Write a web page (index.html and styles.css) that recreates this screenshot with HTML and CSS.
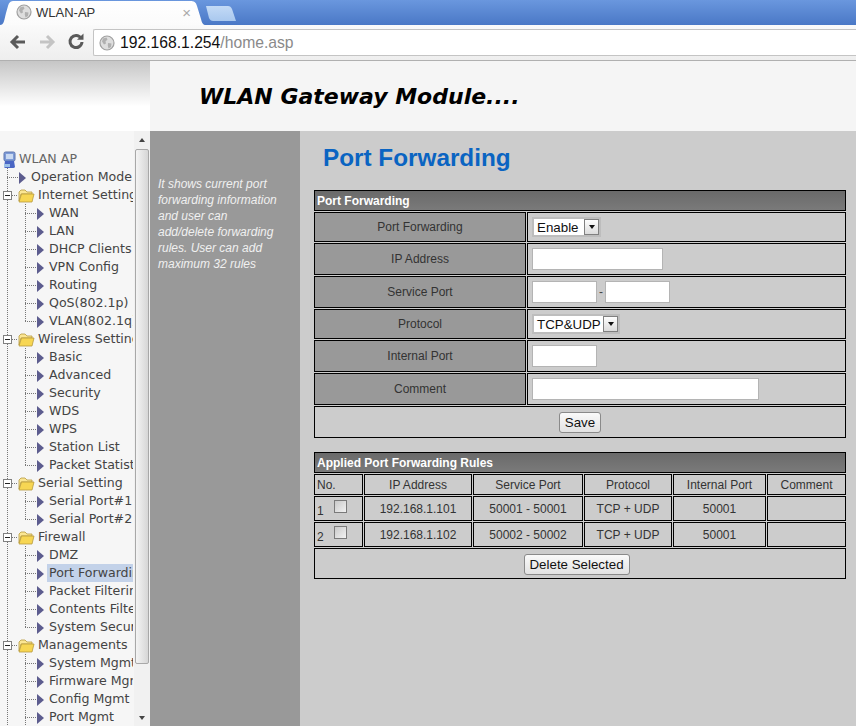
FILE: index.html
```html
<!DOCTYPE html>
<html lang="en">
<head>
<meta charset="utf-8">
<title>WLAN-AP</title>
<link rel="stylesheet" href="styles.css">
</head>
<body>
<svg class="defs" width="0" height="0" aria-hidden="true">
  <defs>
    <symbol id="globe" viewBox="0 0 16 16">
      <circle cx="8" cy="8" r="7" fill="#dedede" stroke="#a0a0a0" stroke-width="1.2"/>
      <path d="M4 3.5 7.5 2.5 8.5 4.5 6.5 6.5 7 8.5 5 9.5 3 6.5zM9 8 12.5 8.5 12 12 9.5 13.5 8.8 10.5z" fill="#b0b0b0"/>
    </symbol>
    <symbol id="arrow" viewBox="0 0 7 14">
      <path d="M0 1 7 7 0 13z" fill="#5c5c8e"/>
    </symbol>
    <symbol id="folder" viewBox="0 0 17 14">
      <path d="M1 3 3 1H7L9 3H14V5H3L1 12z" fill="#fbe694" stroke="#b79a3c" stroke-width=".8"/>
      <path d="M1 13 3.5 5H16L14 13z" fill="#f7d653" stroke="#b79a3c" stroke-width=".8"/>
    </symbol>
    <symbol id="minus" viewBox="0 0 9 9">
      <rect x=".5" y=".5" width="8" height="8" fill="#fff" stroke="#808080"/>
      <path d="M2 4.5H7" stroke="#222"/>
    </symbol>
  </defs>
</svg>

<header class="browser">
  <div class="tabstrip">
    <div class="tab">
      <svg class="tab-globe" width="16" height="16"><use href="#globe"/></svg>
      <span class="tab-title">WLAN-AP</span>
      <span class="tab-close">×</span>
    </div>
    <div class="newtab"></div>
  </div>
  <div class="toolbar">
    <svg class="nav" width="18" height="18" viewBox="0 0 18 18"><path d="M9 3 3 9l6 6M3.5 9H16" fill="none" stroke="#5a5a5a" stroke-width="3"/></svg>
    <svg class="nav" width="18" height="18" viewBox="0 0 18 18"><path d="M9 3l6 6-6 6M14.5 9H2" fill="none" stroke="#c4c4c4" stroke-width="3"/></svg>
    <svg class="nav" width="18" height="18" viewBox="0 0 18 18"><path d="M14 5.2A6 6 0 1 0 15 9" fill="none" stroke="#5a5a5a" stroke-width="3"/><path d="M10 6.8H16.5V.6z" fill="#5a5a5a"/></svg>
    <div class="omnibox">
      <svg width="16" height="16"><use href="#globe"/></svg>
      <span class="url"><span class="host">192.168.1.254</span>/home.asp</span>
    </div>
  </div>
</header>

<div class="banner">
  <div class="banner-fade"></div>
  <div class="banner-title">WLAN Gateway Module....</div>
</div>

<main class="main">
  <nav class="side">
    <div class="tree">
      <div class="row"><svg class="root-icon" width="16" height="18" viewBox="0 0 16 18"><rect x="3" y="1" width="11" height="9" rx="1.5" fill="#7d9bd8" stroke="#5d74ad"/><rect x="5" y="3" width="7" height="5" fill="#c9d9f2"/><path d="M4 10h9l1 6a2 2 0 0 1-2 1H5a2 2 0 0 1-2-1z" fill="#4a66c4"/><path d="M3 13h6v3H3z" fill="#9cc0e8"/></svg><span class="t root-t">WLAN AP</span></div>

      <div class="row"><i class="c j"></i><svg class="leaf" width="7" height="14"><use href="#arrow"/></svg><span class="t">Operation Mode</span></div>

      <div class="row"><i class="c m"><svg width="9" height="9"><use href="#minus"/></svg></i><svg class="fold" width="17" height="14"><use href="#folder"/></svg><span class="t">Internet Settings</span></div>
      <div class="row"><i class="c v"></i><i class="c j"></i><svg class="leaf" width="7" height="14"><use href="#arrow"/></svg><span class="t">WAN</span></div>
      <div class="row"><i class="c v"></i><i class="c j"></i><svg class="leaf" width="7" height="14"><use href="#arrow"/></svg><span class="t">LAN</span></div>
      <div class="row"><i class="c v"></i><i class="c j"></i><svg class="leaf" width="7" height="14"><use href="#arrow"/></svg><span class="t">DHCP Clients</span></div>
      <div class="row"><i class="c v"></i><i class="c j"></i><svg class="leaf" width="7" height="14"><use href="#arrow"/></svg><span class="t">VPN Config</span></div>
      <div class="row"><i class="c v"></i><i class="c j"></i><svg class="leaf" width="7" height="14"><use href="#arrow"/></svg><span class="t">Routing</span></div>
      <div class="row"><i class="c v"></i><i class="c j"></i><svg class="leaf" width="7" height="14"><use href="#arrow"/></svg><span class="t">QoS(802.1p)</span></div>
      <div class="row"><i class="c v"></i><i class="c l"></i><svg class="leaf" width="7" height="14"><use href="#arrow"/></svg><span class="t">VLAN(802.1q)</span></div>

      <div class="row"><i class="c m"><svg width="9" height="9"><use href="#minus"/></svg></i><svg class="fold" width="17" height="14"><use href="#folder"/></svg><span class="t">Wireless Settings</span></div>
      <div class="row"><i class="c v"></i><i class="c j"></i><svg class="leaf" width="7" height="14"><use href="#arrow"/></svg><span class="t">Basic</span></div>
      <div class="row"><i class="c v"></i><i class="c j"></i><svg class="leaf" width="7" height="14"><use href="#arrow"/></svg><span class="t">Advanced</span></div>
      <div class="row"><i class="c v"></i><i class="c j"></i><svg class="leaf" width="7" height="14"><use href="#arrow"/></svg><span class="t">Security</span></div>
      <div class="row"><i class="c v"></i><i class="c j"></i><svg class="leaf" width="7" height="14"><use href="#arrow"/></svg><span class="t">WDS</span></div>
      <div class="row"><i class="c v"></i><i class="c j"></i><svg class="leaf" width="7" height="14"><use href="#arrow"/></svg><span class="t">WPS</span></div>
      <div class="row"><i class="c v"></i><i class="c j"></i><svg class="leaf" width="7" height="14"><use href="#arrow"/></svg><span class="t">Station List</span></div>
      <div class="row"><i class="c v"></i><i class="c l"></i><svg class="leaf" width="7" height="14"><use href="#arrow"/></svg><span class="t">Packet Statistics</span></div>

      <div class="row"><i class="c m"><svg width="9" height="9"><use href="#minus"/></svg></i><svg class="fold" width="17" height="14"><use href="#folder"/></svg><span class="t">Serial Setting</span></div>
      <div class="row"><i class="c v"></i><i class="c j"></i><svg class="leaf" width="7" height="14"><use href="#arrow"/></svg><span class="t">Serial Port#1</span></div>
      <div class="row"><i class="c v"></i><i class="c l"></i><svg class="leaf" width="7" height="14"><use href="#arrow"/></svg><span class="t">Serial Port#2</span></div>

      <div class="row"><i class="c m"><svg width="9" height="9"><use href="#minus"/></svg></i><svg class="fold" width="17" height="14"><use href="#folder"/></svg><span class="t">Firewall</span></div>
      <div class="row"><i class="c v"></i><i class="c j"></i><svg class="leaf" width="7" height="14"><use href="#arrow"/></svg><span class="t">DMZ</span></div>
      <div class="row"><i class="c v"></i><i class="c j"></i><svg class="leaf" width="7" height="14"><use href="#arrow"/></svg><span class="t sel">Port Forwarding</span></div>
      <div class="row"><i class="c v"></i><i class="c j"></i><svg class="leaf" width="7" height="14"><use href="#arrow"/></svg><span class="t">Packet Filtering</span></div>
      <div class="row"><i class="c v"></i><i class="c j"></i><svg class="leaf" width="7" height="14"><use href="#arrow"/></svg><span class="t">Contents Filter</span></div>
      <div class="row"><i class="c v"></i><i class="c l"></i><svg class="leaf" width="7" height="14"><use href="#arrow"/></svg><span class="t">System Security</span></div>

      <div class="row"><i class="c m"><svg width="9" height="9"><use href="#minus"/></svg></i><svg class="fold" width="17" height="14"><use href="#folder"/></svg><span class="t">Managements</span></div>
      <div class="row"><i class="c v"></i><i class="c j"></i><svg class="leaf" width="7" height="14"><use href="#arrow"/></svg><span class="t">System Mgmt</span></div>
      <div class="row"><i class="c v"></i><i class="c j"></i><svg class="leaf" width="7" height="14"><use href="#arrow"/></svg><span class="t">Firmware Mgmt</span></div>
      <div class="row"><i class="c v"></i><i class="c j"></i><svg class="leaf" width="7" height="14"><use href="#arrow"/></svg><span class="t">Config Mgmt</span></div>
      <div class="row"><i class="c v"></i><i class="c j"></i><svg class="leaf" width="7" height="14"><use href="#arrow"/></svg><span class="t">Port Mgmt</span></div>
    </div>
    <div class="scrollbar">
      <span class="sb-up"></span>
      <div class="sb-thumb"></div>
      <span class="sb-down"></span>
    </div>
  </nav>

  <aside class="help">It shows current port<br>forwarding information<br>and user can<br>add/delete forwarding<br>rules. User can add<br>maximum 32 rules</aside>

  <section class="content">
    <h1 class="page-title">Port Forwarding</h1>

    <table class="grid form">
      <colgroup><col class="f1"><col class="f2"></colgroup>
      <tr class="h21"><th colspan="2" class="title">Port Forwarding</th></tr>
      <tr class="h30"><td class="label">Port Forwarding</td><td class="val"><span class="select sel-a">Enable<b class="drop"></b></span></td></tr>
      <tr class="h32"><td class="label">IP Address</td><td class="val"><input class="in w-ip" type="text"></td></tr>
      <tr class="h32"><td class="label">Service Port</td><td class="val"><span class="ports"><input class="in w-port" type="text"><span class="dash">-</span><input class="in w-port" type="text"></span></td></tr>
      <tr class="h30"><td class="label">Protocol</td><td class="val"><span class="select sel-b">TCP&amp;UDP<b class="drop"></b></span></td></tr>
      <tr class="h32"><td class="label">Internal Port</td><td class="val"><input class="in w-port" type="text"></td></tr>
      <tr class="h32"><td class="label">Comment</td><td class="val"><input class="in w-com" type="text"></td></tr>
      <tr class="h32"><td colspan="2" class="center"><button class="btn btn-save" type="button">Save</button></td></tr>
    </table>

    <table class="grid rules">
      <colgroup><col class="r1"><col class="r2"><col class="r3"><col class="r4"><col class="r5"><col class="r6"></colgroup>
      <tr class="h21"><th colspan="6" class="title">Applied Port Forwarding Rules</th></tr>
      <tr class="h21 hd"><td class="no">No.</td><td>IP Address</td><td>Service Port</td><td>Protocol</td><td>Internal Port</td><td>Comment</td></tr>
      <tr class="h25"><td class="no"><span class="idx">1</span><input class="chk" type="checkbox"></td><td>192.168.1.101</td><td>50001 - 50001</td><td>TCP + UDP</td><td>50001</td><td></td></tr>
      <tr class="h25"><td class="no"><span class="idx">2</span><input class="chk" type="checkbox"></td><td>192.168.1.102</td><td>50002 - 50002</td><td>TCP + UDP</td><td>50001</td><td></td></tr>
      <tr class="h31"><td colspan="6" class="center del-cell"><button class="btn btn-del" type="button">Delete Selected</button></td></tr>
    </table>
  </section>
</main>
</body>
</html>
```
FILE: styles.css
```css
* { box-sizing: border-box; }
html, body { margin: 0; padding: 0; }
body {
  width: 856px;
  height: 726px;
  overflow: hidden;
  font-family: "Liberation Sans", Arial, sans-serif;
  background: #fff;
}
.defs { display: block; height: 0; }

/* Browser chrome */
.browser { height: 61px; }
.tabstrip {
  height: 25px;
  display: flex;
  align-items: flex-end;
  background: linear-gradient(#6a97de, #4a78c6);
}
.tab {
  width: 206px;
  height: 24px;
  display: flex;
  align-items: center;
  padding: 0 0 2px 16px;
  background: linear-gradient(#fff, #fbfbfb);
  clip-path: path("M0 24 C4 24 4 20 6 12 L8 5 C9 1 11 0 14 0 L190 0 C194 0 196 1 197 5 L201 18 C202 22 203 24 206 24 Z");
}
.tab-globe { flex: none; }
.tab-title {
  margin-left: 4px;
  font-size: 13px;
  color: #333;
  flex: 1;
}
.tab-close {
  margin-right: 15px;
  font-size: 15px;
  color: #aaa;
  line-height: 1;
}
.newtab {
  width: 30px;
  height: 15px;
  margin: 0 0 4px 0;
  background: linear-gradient(#c3daf6, #a9c8ee);
  clip-path: path("M0 0 L22 0 C24 0 25 1 26 3 L30 15 L7 15 C5 15 4 14 3 12 Z");
}
.toolbar {
  height: 36px;
  display: flex;
  align-items: center;
  padding-left: 9px;
  background: linear-gradient(#fafafa, #eeeeee);
  border-bottom: 1px solid #b0b0b0;
}
.nav { flex: none; margin: 0 11px 2px 0; }
.nav:nth-child(3) { margin-right: 10px; }
.omnibox {
  flex: 1;
  height: 27px;
  display: flex;
  align-items: center;
  gap: 5px;
  margin-left: -2px;
  padding-left: 5px;
  background: #fff;
  border: 1px solid #c4c4c4;
  border-right: 0;
  border-radius: 2px 0 0 2px;
}
.url { font-size: 15.7px; color: #8a8a8a; }
.host { color: #111; }

/* Banner */
.banner { height: 70px; display: flex; background: #f5f5f5; }
.banner-fade {
  width: 150px;
  background: linear-gradient(#c6c6c6, #fff 65%);
}
.banner-title {
  padding: 21px 0 0 49px;
  font-family: "DejaVu Sans", Verdana, sans-serif;
  font-size: 22px;
  line-height: 30px;
  font-weight: bold;
  font-style: italic;
  color: #000;
}

/* Main columns */
.main { height: 595px; display: flex; overflow: hidden; }
.side {
  width: 150px;
  flex: none;
  display: flex;
  background: #f6f6f6;
}
.tree {
  width: 133px;
  flex: none;
  margin-right: 1px;
  padding-top: 19px;
  overflow: hidden;
  font-family: "DejaVu Sans", Verdana, sans-serif;
  font-size: 12.6px;
  color: #444;
}
.row {
  height: 18px;
  display: flex;
  align-items: center;
  white-space: nowrap;
}
.c {
  flex: none;
  display: flex;
  align-items: center;
  width: 18px;
  height: 18px;
  background-repeat: no-repeat;
}
.v {
  background-image: repeating-linear-gradient(#777 0 1px, transparent 1px 2px);
  background-position: 7px 0;
  background-size: 1px 100%;
}
.j {
  background-image:
    repeating-linear-gradient(#777 0 1px, transparent 1px 2px),
    repeating-linear-gradient(90deg, #777 0 1px, transparent 1px 2px);
  background-position: 7px 0, 7px 9px;
  background-size: 1px 100%, 11px 1px;
}
.l {
  background-image:
    repeating-linear-gradient(#777 0 1px, transparent 1px 2px),
    repeating-linear-gradient(90deg, #777 0 1px, transparent 1px 2px);
  background-position: 7px 0, 7px 9px;
  background-size: 1px 10px, 11px 1px;
}
.m {
  padding-left: 3px;
  background-image:
    repeating-linear-gradient(#777 0 1px, transparent 1px 2px),
    repeating-linear-gradient(90deg, #777 0 1px, transparent 1px 2px);
  background-position: 7px 0, 12px 9px;
  background-size: 1px 100%, 6px 1px;
}
.m svg { display: block; background: #fff; }
.leaf { flex: none; margin: 2px 0 0 1px; }
.fold { flex: none; margin-top: 1px; }
.root-icon { flex: none; margin: 1px 0 0 1px; }
.t { padding: 0 2px; line-height: 18px; height: 18px; margin-left: 3px; }
.fold + .t { margin-left: 1px; }
.root-t { margin-left: 0; color: #666; }
.sel { background: #c3d2e9; flex: 1; }

.scrollbar {
  width: 16px;
  flex: none;
  display: flex;
  flex-direction: column;
  align-items: center;
  background: #f1f1f1;
}
.sb-up, .sb-down {
  flex: none;
  width: 0;
  height: 0;
  border-left: 3.5px solid transparent;
  border-right: 3.5px solid transparent;
}
.sb-up { margin: 7px 0 7px; border-bottom: 4px solid #444; }
.sb-down { margin-top: 52px; border-top: 4px solid #444; }
.sb-thumb {
  width: 14px;
  height: 515px;
  flex: none;
  background: linear-gradient(90deg, #f4f4f4, #d6d6d6);
  border: 1px solid #a8a8a8;
  border-radius: 2px;
}

/* Help column */
.help {
  width: 150px;
  flex: none;
  padding: 45px 0 0 8px;
  background: #999;
  color: #f0f0f0;
  font-size: 12px;
  line-height: 16px;
  font-style: italic;
}

/* Content */
.content {
  flex: 1;
  padding-left: 13px;
  background: #ccc;
  color: #333;
}
.page-title {
  height: 58px;
  margin: 0;
  padding: 11px 0 0 10px;
  font-size: 24.3px;
  line-height: 32px;
  font-weight: bold;
  color: #0a64c2;
}
.grid {
  width: 534px;
  table-layout: fixed;
  border-collapse: separate;
  border-spacing: 1px;
  font-size: 12px;
}
.grid td, .grid th {
  padding: 0;
  border: 1px solid #000;
  text-align: center;
  vertical-align: middle;
  color: #333;
  font-weight: normal;
}
.grid .title {
  padding-left: 2px;
  text-align: left;
  font-weight: bold;
  color: #fff;
  background: linear-gradient(#6a6a6a, #7a7a7a);
}
.h21 { height: 21px; }
.h25 { height: 25px; }
.h30 { height: 30px; }
.h31 { height: 31px; }
.h32 { height: 32px; }
.f1 { width: 212px; }
.f2 { width: 319px; }
.r1 { width: 49px; }
.r2 { width: 108px; }
.r3 { width: 110px; }
.r4 { width: 88px; }
.r5 { width: 93px; }
.r6 { width: 79px; }
.rules { margin-top: 12px; }

.grid .label { background: #999; }
.grid .val { padding-left: 4px; text-align: left; font-size: 0; }
.grid .no { padding-left: 2px; text-align: left; }
.grid .center { padding: 0; }

.idx { display: inline-block; width: 17px; vertical-align: -3px; }
.chk {
  appearance: none;
  width: 13px;
  height: 13px;
  margin: 0;
  vertical-align: -1px;
  background: linear-gradient(135deg, #c9c9c9, #f2f2f2);
  border: 1px solid #7a7a7a;
}

.in {
  height: 22px;
  margin: 0;
  padding: 0 2px;
  background: #fff;
  border: 1px solid #b4b4b4;
  vertical-align: middle;
}
.w-ip { width: 131px; }
.w-port { width: 65px; }
.w-com { width: 227px; }
.ports { display: inline-flex; align-items: center; }
.dash { width: 8px; text-align: center; font-size: 12px; color: #444; }

.select {
  display: inline-flex;
  align-items: center;
  justify-content: space-between;
  height: 20px;
  padding-left: 3px;
  background: #fff;
  border: 2px solid #bdbdbd;
  font-size: 13.33px;
  color: #111;
  vertical-align: middle;
}
.sel-a { width: 69px; }
.sel-b { width: 88px; }
.drop {
  display: flex;
  align-items: center;
  justify-content: center;
  width: 15px;
  height: 16px;
  background: linear-gradient(#fdfdfd, #dcdcdc);
  border: 1px solid #808080;
}
.drop::after {
  content: "";
  width: 0;
  height: 0;
  border-left: 3.5px solid transparent;
  border-right: 3.5px solid transparent;
  border-top: 4px solid #111;
}

.btn {
  height: 21px;
  padding: 0;
  font-family: "Liberation Sans", Arial, sans-serif;
  font-size: 13.33px;
  color: #111;
  background: linear-gradient(#fafafa, #e2e2e2);
  border: 1px solid #8a8a8a;
  border-radius: 3px;
}
.btn-save { width: 42px; }
.btn-del { width: 106px; margin: 1px 0 0 -7px; }
```
